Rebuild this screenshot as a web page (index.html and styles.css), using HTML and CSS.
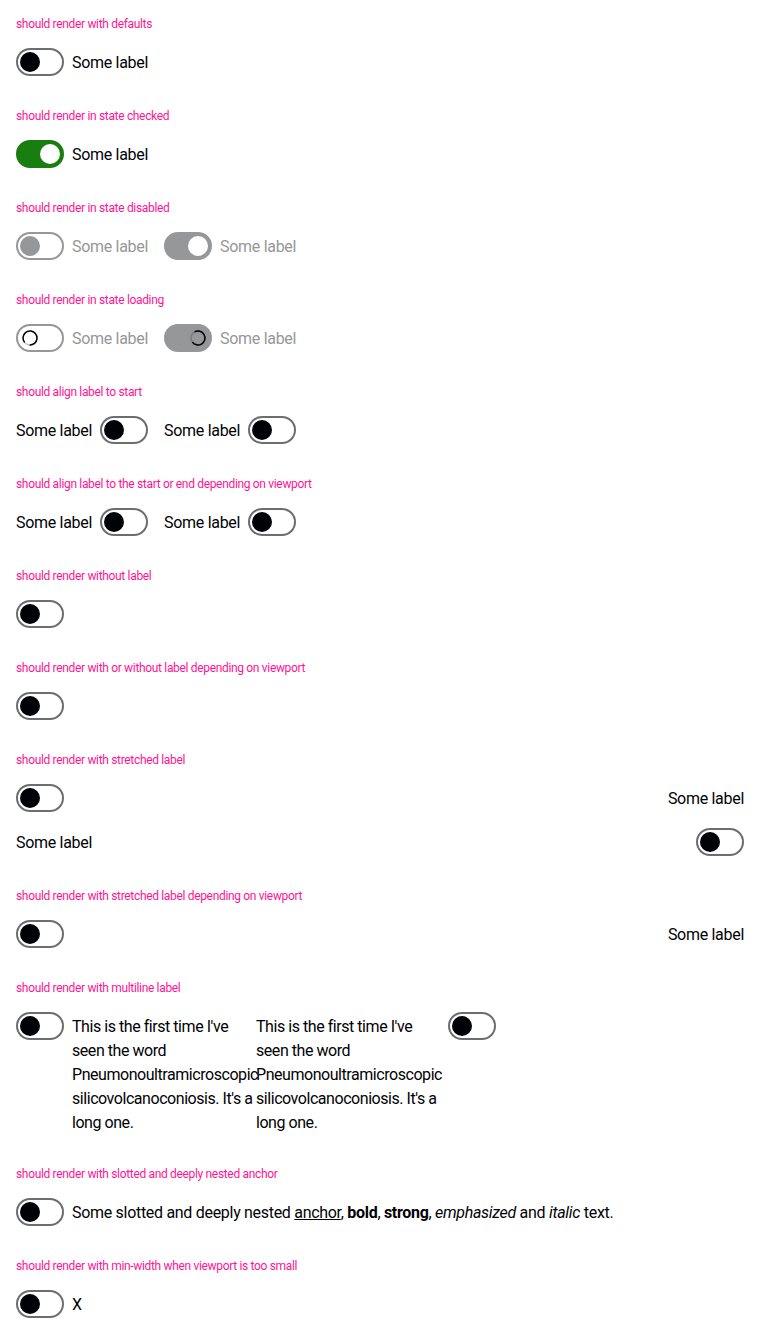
FILE: index.html
```html
<!DOCTYPE html>
<html lang="en">
<head>
<meta charset="utf-8">
<title>Switch</title>
<link rel="stylesheet" href="styles.css">
</head>
<body>
<div class="page">

  <section class="case">
    <p class="title">should render with defaults</p>
    <div class="row">
      <label class="switch"><span class="track"><span class="knob"></span></span><span class="label">Some label</span></label>
    </div>
  </section>

  <section class="case">
    <p class="title">should render in state checked</p>
    <div class="row">
      <label class="switch"><span class="track is-checked"><span class="knob"></span></span><span class="label">Some label</span></label>
    </div>
  </section>

  <section class="case">
    <p class="title">should render in state disabled</p>
    <div class="row">
      <label class="switch is-disabled"><span class="track"><span class="knob"></span></span><span class="label">Some label</span></label>
      <label class="switch is-disabled"><span class="track is-checked"><span class="knob"></span></span><span class="label">Some label</span></label>
    </div>
  </section>

  <section class="case">
    <p class="title">should render in state loading</p>
    <div class="row">
      <label class="switch is-disabled is-loading"><span class="track"><span class="knob"><svg class="spinner" viewBox="0 0 20 20"><circle cx="10" cy="10" r="7" fill="none" stroke="#c9cacb" stroke-width="1.5"/><circle cx="10" cy="10" r="7" fill="none" stroke="#010205" stroke-width="1.5" stroke-dasharray="38 44" transform="rotate(-220 10 10)"/></svg></span></span><span class="label">Some label</span></label>
      <label class="switch is-disabled is-loading"><span class="track is-checked"><span class="knob"><svg class="spinner" viewBox="0 0 20 20"><circle cx="10" cy="10" r="7" fill="none" stroke="#7a7b7d" stroke-width="1.5"/><circle cx="10" cy="10" r="7" fill="none" stroke="#010205" stroke-width="1.5" stroke-dasharray="32 44" transform="rotate(-120 10 10)"/></svg></span></span><span class="label">Some label</span></label>
    </div>
  </section>

  <section class="case">
    <p class="title">should align label to start</p>
    <div class="row">
      <label class="switch"><span class="label">Some label</span><span class="track"><span class="knob"></span></span></label>
      <label class="switch"><span class="label">Some label</span><span class="track"><span class="knob"></span></span></label>
    </div>
  </section>

  <section class="case">
    <p class="title">should align label to the start or end depending on viewport</p>
    <div class="row">
      <label class="switch"><span class="label">Some label</span><span class="track"><span class="knob"></span></span></label>
      <label class="switch"><span class="label">Some label</span><span class="track"><span class="knob"></span></span></label>
    </div>
  </section>

  <section class="case">
    <p class="title">should render without label</p>
    <div class="row">
      <label class="switch"><span class="track"><span class="knob"></span></span></label>
    </div>
  </section>

  <section class="case">
    <p class="title">should render with or without label depending on viewport</p>
    <div class="row">
      <label class="switch"><span class="track"><span class="knob"></span></span></label>
    </div>
  </section>

  <section class="case">
    <p class="title">should render with stretched label</p>
    <div class="stack">
      <label class="switch is-stretch"><span class="track"><span class="knob"></span></span><span class="label">Some label</span></label>
      <label class="switch is-stretch"><span class="label">Some label</span><span class="track"><span class="knob"></span></span></label>
    </div>
  </section>

  <section class="case">
    <p class="title">should render with stretched label depending on viewport</p>
    <div class="stack">
      <label class="switch is-stretch"><span class="track"><span class="knob"></span></span><span class="label">Some label</span></label>
    </div>
  </section>

  <section class="case">
    <p class="title">should render with multiline label</p>
    <div class="row is-tight">
      <label class="switch is-fixed"><span class="track"><span class="knob"></span></span><span class="label">This is the first time I've seen the word Pneumonoultramicroscopic<wbr>silicovolcanoconiosis. It's a long one.</span></label>
      <label class="switch is-fixed"><span class="label">This is the first time I've seen the word Pneumonoultramicroscopic<wbr>silicovolcanoconiosis. It's a long one.</span><span class="track"><span class="knob"></span></span></label>
    </div>
  </section>

  <section class="case">
    <p class="title">should render with slotted and deeply nested anchor</p>
    <div class="row">
      <label class="switch"><span class="track"><span class="knob"></span></span><span class="label">Some slotted and deeply nested <a href="#">anchor</a>, <b>bold</b>, <strong>strong</strong>, <em>emphasized</em> and <i>italic</i> text.</span></label>
    </div>
  </section>

  <section class="case">
    <p class="title">should render with min-width when viewport is too small</p>
    <div class="row">
      <label class="switch"><span class="track"><span class="knob"></span></span><span class="label">X</span></label>
    </div>
  </section>

</div>
</body>
</html>
```

FILE: styles.css
```css
html, body {
  margin: 0;
  padding: 0;
  background: #ffffff;
}

body {
  font-family: Roboto, "Liberation Sans", Arial, sans-serif;
  color: #010205;
}

.page {
  padding: 16px;
}

.case {
  margin: 0 0 32px;
}

.title {
  margin: 0 0 16px;
  font-size: 12px;
  line-height: 16px;
  letter-spacing: -0.33px;
  color: #ff1493;
}

.row {
  display: flex;
  align-items: flex-start;
  gap: 16px;
}

.row.is-tight {
  gap: 0;
}

.stack {
  display: flex;
  flex-direction: column;
  gap: 16px;
}

.switch {
  display: flex;
  align-items: flex-start;
  gap: 8px;
  font-size: 16px;
  line-height: 24px;
  letter-spacing: -0.3px;
  color: #010205;
}

.switch.is-stretch {
  justify-content: space-between;
  width: 100%;
}

.switch.is-fixed {
  width: 240px;
}

.switch.is-fixed .label {
  flex: 1;
  min-width: 0;
  letter-spacing: -0.45px;
}

.label {
  margin-top: 3px;
  margin-bottom: -1px;
}

.label a {
  color: inherit;
  text-decoration: underline;
}

.track {
  box-sizing: border-box;
  flex-shrink: 0;
  display: flex;
  align-items: center;
  width: 48px;
  height: 28px;
  padding: 2px;
  border: 2px solid #6b6d70;
  border-radius: 14px;
  background: #ffffff;
}

.knob {
  display: block;
  width: 20px;
  height: 20px;
  border-radius: 50%;
  background: #010205;
}

.track.is-checked {
  justify-content: flex-end;
  background: #197e10;
  border-color: #197e10;
}

.track.is-checked .knob {
  background: #ffffff;
}

.is-disabled {
  color: #969799;
}

.is-disabled .track {
  border-color: #969799;
}

.is-disabled .knob {
  background: #969799;
}

.is-disabled .track.is-checked {
  background: #969799;
  border-color: #969799;
}

.is-disabled .track.is-checked .knob {
  background: #ffffff;
}

.is-loading .knob {
  background: #ffffff;
}

.is-loading .track.is-checked .knob {
  background: #969799;
}

.spinner {
  display: block;
  width: 20px;
  height: 20px;
}
```
